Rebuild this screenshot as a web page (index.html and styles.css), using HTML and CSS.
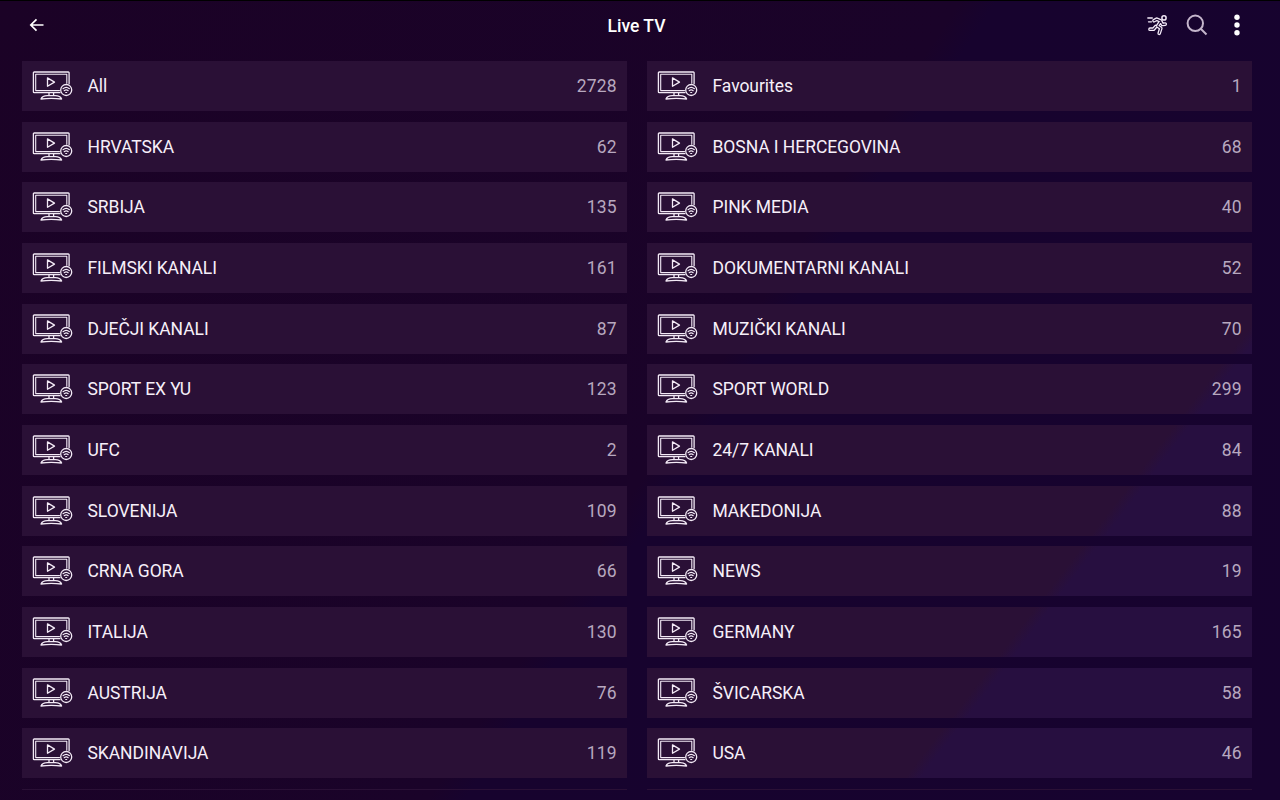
FILE: index.html
```html
<!DOCTYPE html>
<html lang="hr">
<head>
<meta charset="utf-8">
<title>Live TV</title>
<link rel="stylesheet" href="styles.css">
</head>
<body>
<svg class="sprite" aria-hidden="true">
  <symbol id="tv" viewBox="0 0 42 32">
    <g fill="none" stroke="currentColor" stroke-linecap="round" stroke-linejoin="round">
      <path stroke-width="1.3" d="M28 22.700H2.200a.8.8 0 0 1-.8-.8V2.800a.8.8 0 0 1 .8-.8h34.100a.8.8 0 0 1 .8.8v11"/>
      <path stroke-width="1.1" d="M27.500 20.600H3.700V4.300h31.100v9"/>
      <path stroke-width="1.300" d="M15.500 7.900v8.400l7-4.200z"/>
      <path stroke-width="1.300" d="M17 23v2.500M21.600 23v2.500M9 29c.8-2 3.500-3.300 6.300-3.300h8c2.800 0 5.500 1.300 6.300 3.300q-10.300-1.200-20.600 0z"/>
      <circle cx="34.200" cy="20" r="5.500" stroke-width="1.300"/>
      <path stroke-width="1.200" d="M31 18.700c2-1.700 4.400-1.700 6.400 0M32.200 20.700c1.300-1 2.700-1 4 0M33.700 22.500h1"/>
    </g>
  </symbol>
</svg>
<header class="bar">
  <svg class="back" viewBox="0 0 16 16"><path d="M14.500 8H2M7.500 2.300 1.800 8l5.700 5.700"/></svg>
  <h1 class="title">Live TV</h1>
  <div class="actions">
    <svg class="runner" viewBox="0 0 22 22">
      <g class="halo"><circle cx="18" cy="3.900" r="2.100"/><path d="M8 6.700l2.800-1.500 4 1.800-3.200 5 3.200 2.300-1.600 5M9.800 12.500l-2.300 2.700H4M14.800 7.500l1.700 3 2.700-.4"/></g>
      <path class="core" d="M8 6.700l2.800-1.500 4 1.800-3.200 5 3.200 2.300-1.600 5M9.800 12.500l-2.300 2.700H4M14.800 7.500l1.700 3 2.700-.4"/>
      <path class="speed" d="M1.800 4h4.500M2.500 7.800h3"/>
    </svg>
    <svg class="search" viewBox="0 0 22 22"><circle cx="9.300" cy="9.300" r="7.700"/><path d="M15 15l5.500 5.500"/></svg>
    <svg class="more" viewBox="0 0 6 22"><circle cx="3" cy="3.300" r="2.700"/><circle cx="3" cy="11" r="2.700"/><circle cx="3" cy="18.700" r="2.700"/></svg>
  </div>
</header>
<main class="grid">
  <div class="card"><svg class="tv"><use href="#tv"/></svg><span class="name">All</span><span class="count">2728</span></div>
  <div class="card"><svg class="tv"><use href="#tv"/></svg><span class="name">Favourites</span><span class="count">1</span></div>
  <div class="card"><svg class="tv"><use href="#tv"/></svg><span class="name">HRVATSKA</span><span class="count">62</span></div>
  <div class="card"><svg class="tv"><use href="#tv"/></svg><span class="name">BOSNA I HERCEGOVINA</span><span class="count">68</span></div>
  <div class="card"><svg class="tv"><use href="#tv"/></svg><span class="name">SRBIJA</span><span class="count">135</span></div>
  <div class="card"><svg class="tv"><use href="#tv"/></svg><span class="name">PINK MEDIA</span><span class="count">40</span></div>
  <div class="card"><svg class="tv"><use href="#tv"/></svg><span class="name">FILMSKI KANALI</span><span class="count">161</span></div>
  <div class="card"><svg class="tv"><use href="#tv"/></svg><span class="name">DOKUMENTARNI KANALI</span><span class="count">52</span></div>
  <div class="card"><svg class="tv"><use href="#tv"/></svg><span class="name">DJEČJI KANALI</span><span class="count">87</span></div>
  <div class="card"><svg class="tv"><use href="#tv"/></svg><span class="name">MUZIČKI KANALI</span><span class="count">70</span></div>
  <div class="card"><svg class="tv"><use href="#tv"/></svg><span class="name">SPORT EX YU</span><span class="count">123</span></div>
  <div class="card"><svg class="tv"><use href="#tv"/></svg><span class="name">SPORT WORLD</span><span class="count">299</span></div>
  <div class="card"><svg class="tv"><use href="#tv"/></svg><span class="name">UFC</span><span class="count">2</span></div>
  <div class="card"><svg class="tv"><use href="#tv"/></svg><span class="name">24/7 KANALI</span><span class="count">84</span></div>
  <div class="card"><svg class="tv"><use href="#tv"/></svg><span class="name">SLOVENIJA</span><span class="count">109</span></div>
  <div class="card"><svg class="tv"><use href="#tv"/></svg><span class="name">MAKEDONIJA</span><span class="count">88</span></div>
  <div class="card"><svg class="tv"><use href="#tv"/></svg><span class="name">CRNA GORA</span><span class="count">66</span></div>
  <div class="card"><svg class="tv"><use href="#tv"/></svg><span class="name">NEWS</span><span class="count">19</span></div>
  <div class="card"><svg class="tv"><use href="#tv"/></svg><span class="name">ITALIJA</span><span class="count">130</span></div>
  <div class="card"><svg class="tv"><use href="#tv"/></svg><span class="name">GERMANY</span><span class="count">165</span></div>
  <div class="card"><svg class="tv"><use href="#tv"/></svg><span class="name">AUSTRIJA</span><span class="count">76</span></div>
  <div class="card"><svg class="tv"><use href="#tv"/></svg><span class="name">ŠVICARSKA</span><span class="count">58</span></div>
  <div class="card"><svg class="tv"><use href="#tv"/></svg><span class="name">SKANDINAVIJA</span><span class="count">119</span></div>
  <div class="card"><svg class="tv"><use href="#tv"/></svg><span class="name">USA</span><span class="count">46</span></div>
  <div class="edge"></div>
  <div class="edge"></div>
</main>
</body>
</html>
```
FILE: styles.css
```css
* { box-sizing: border-box; }
body {
  margin: 0;
  width: 1280px;
  height: 800px;
  overflow: hidden;
  border-top: 1px solid #000;
  font-family: Roboto, sans-serif;
  color: #f6eff9;
  background: linear-gradient(123.7deg, #1b0226 0%, #1a0329 53%, #17032e 55%, #17032f 100%) fixed;
}
.sprite { display: none; }
.bar {
  display: grid;
  grid-template-columns: 1fr auto 1fr;
  align-items: center;
  height: 48px;
  padding: 0 38px 0 29px;
}
.back { width: 16px; height: 16px; fill: none; stroke: #fff; stroke-width: 1.7; }
.title { margin: 0 -2px 0 0; padding-top: 2px; font-size: 17.5px; font-weight: 500; line-height: 22px; color: #fff; }
.actions { display: flex; align-items: center; justify-content: flex-end; }
.runner { width: 22px; height: 22px; margin-right: 18px; fill: none; stroke-linecap: round; stroke-linejoin: round; }
.halo { stroke: #f3eaf8; stroke-width: 3.7; }
.halo circle { stroke-width: 1.5; }
.core { stroke: #17032e; stroke-width: 1.1; }
.speed { stroke: #f3eaf8; stroke-width: 1.3; }
.search { width: 22px; height: 22px; margin-right: 26px; fill: none; stroke: #c5b6cc; stroke-width: 2; }
.more { width: 6px; height: 22px; margin-right: 2px; fill: #fff; }
.grid {
  display: grid;
  grid-template-columns: 605px 605px;
  column-gap: 20px;
  row-gap: 10.68px;
  padding: 11.9px 0 0 22px;
}
.card {
  display: flex;
  align-items: center;
  height: 50px;
  padding: 0 10.3px 0 10px;
  font-size: 17.5px;
  line-height: 24px;
  background: linear-gradient(127.4deg, #2a1036 0%, #2a1036 79.3%, #270f40 80.1%, #270f40 100%) fixed;
}
.tv { width: 42px; height: 32px; color: #f3eaf6; }
.name { flex: 1; margin-left: 13.5px; letter-spacing: -0.06px; }
.count { color: #b7a8bf; letter-spacing: 0.15px; }
.edge { height: 1px; background: #2a1036; }
```
